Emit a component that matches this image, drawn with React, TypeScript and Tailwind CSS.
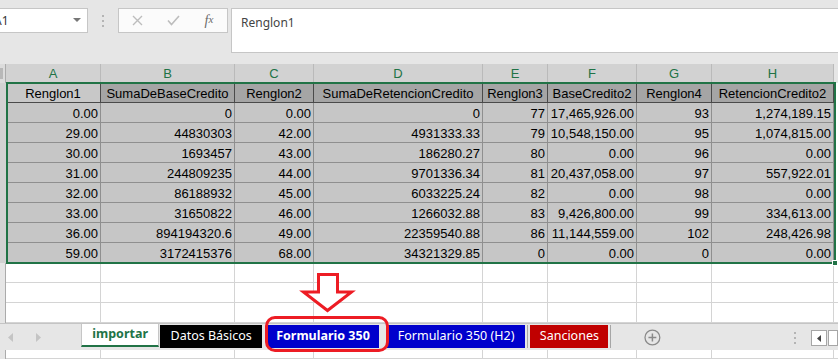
import React from 'react';

const COLS = [
  { key: 'A', w: 'w-[95px]' },
  { key: 'B', w: 'w-[134px]' },
  { key: 'C', w: 'w-[79px]' },
  { key: 'D', w: 'w-[169px]' },
  { key: 'E', w: 'w-[65px]' },
  { key: 'F', w: 'w-[89px]' },
  { key: 'G', w: 'w-[75px]' },
  { key: 'H', w: 'w-[122px]' },
];

const HEADERS = ['Renglon1', 'SumaDeBaseCredito', 'Renglon2', 'SumaDeRetencionCredito', 'Renglon3', 'BaseCredito2', 'Renglon4', 'RetencionCredito2'];

const ROWS = [
  ['0.00', '0', '0.00', '0', '77', '17,465,926.00', '93', '1,274,189.15'],
  ['29.00', '44830303', '42.00', '4931333.33', '79', '10,548,150.00', '95', '1,074,815.00'],
  ['30.00', '1693457', '43.00', '186280.27', '80', '0.00', '96', '0.00'],
  ['31.00', '244809235', '44.00', '9701336.34', '81', '20,437,058.00', '97', '557,922.01'],
  ['32.00', '86188932', '45.00', '6033225.24', '82', '0.00', '98', '0.00'],
  ['33.00', '31650822', '46.00', '1266032.88', '83', '9,426,800.00', '99', '334,613.00'],
  ['36.00', '894194320.6', '49.00', '22359540.88', '86', '11,144,559.00', '102', '248,426.98'],
  ['59.00', '3172415376', '68.00', '34321329.85', '0', '0.00', '0', '0.00'],
];

const EmptyRow = ({ h = 'h-[20px]' }: { h?: string }) => (
  <div className={`flex ${h}`}>
    <div className="w-[6px] bg-[#e6e6e6] border-r border-[#ababab]" />
    {COLS.map(c => (
      <div key={c.key} className={`${c.w} bg-white border-r border-b border-[#d4d4d4]`} />
    ))}
    <div className="flex-1 bg-white border-b border-[#d4d4d4]" />
  </div>
);

const TabSep = () => <div className="w-[1px] h-[23px] mt-[1px] bg-[#a6a6a6]" />;

export default function App() {
  return (
    <div className="relative w-[838px] h-[359px] overflow-hidden bg-[#e6e6e6] font-['Liberation_Sans',sans-serif]">
      {/* formula bar */}
      <div className="h-[64px] flex items-start pt-[8px] font-['Noto_Sans',sans-serif]">
        <div className="w-[88px] h-[25px] bg-white border border-l-0 border-[#c6c6c6] flex items-center overflow-hidden">
          <span className="ml-[-6px] text-[12px] text-[#333]">A1</span>
          <svg className="ml-auto mr-[6px]" width="8" height="5" viewBox="0 0 8 5">
            <path d="M0 0 L8 0 L4 4 Z" fill="#777" />
          </svg>
        </div>
        <div className="ml-[14px] mt-[7px] flex flex-col gap-[3px]">
          <div className="w-[2px] h-[2px] bg-[#b4b4b4]" />
          <div className="w-[2px] h-[2px] bg-[#b4b4b4]" />
          <div className="w-[2px] h-[2px] bg-[#b4b4b4]" />
        </div>
        <div className="ml-[14px] w-[110px] h-[25px] bg-[#fbfbfb] border border-[#c6c6c6] flex items-center">
          <span className="w-[36px] flex justify-center">
            <svg width="11" height="11" viewBox="0 0 11 11">
              <path d="M1 1 L10 10 M10 1 L1 10" stroke="#bdbdbd" strokeWidth="1.4" />
            </svg>
          </span>
          <span className="w-[36px] flex justify-center">
            <svg width="13" height="11" viewBox="0 0 13 11">
              <path d="M1 5.5 L4.5 9.5 L12 1" stroke="#bdbdbd" strokeWidth="1.6" fill="none" />
            </svg>
          </span>
          <span className="w-[36px] flex justify-center font-['Liberation_Serif',serif] italic text-[14px] text-[#6b6b6b] leading-none">
            f<span className="text-[11px]">x</span>
          </span>
        </div>
        <div className="ml-[3px] flex-1 h-[45px] bg-white border border-r-0 border-[#c6c6c6] pl-[9px] pt-[5px] text-[12px] text-[#444]">
          Renglon1
        </div>
      </div>

      {/* column headers */}
      <div className="flex h-[19px]">
        <div className="w-[6px] bg-[#dcdcdc] border-r border-[#ababab] relative overflow-hidden">
          <div className="absolute left-0 top-[4px] w-[3px] h-[11px] bg-[#b8b8b8]" />
        </div>
        {COLS.map(c => (
          <div key={c.key} className={`${c.w} bg-[#d2d2d2] border-r border-[#bababa] flex items-center justify-center text-[13px] text-[#217346]`}>
            {c.key}
          </div>
        ))}
        <div className="flex-1 bg-[#e6e6e6]" />
      </div>

      {/* table */}
      <div className="flex h-[20px]">
        <div className="w-[6px] bg-[#d2d2d2]" />
        {COLS.map((c, i) => (
          <div
            key={c.key}
            className={`${c.w} ${i === 0 ? 'bg-[#c8c8c8]' : 'bg-[#a5a5a5]'} border-r border-b border-[#4a4a4a] flex items-center justify-center pt-[2px] text-[13px] text-black whitespace-nowrap overflow-hidden`}
          >
            {HEADERS[i]}
          </div>
        ))}
        <div className="flex-1 bg-white" />
      </div>
      {ROWS.map((r, ri) => (
        <div key={ri} className="flex h-[20px]">
          <div className="w-[6px] bg-[#d2d2d2]" />
          {COLS.map((c, i) => (
            <div
              key={c.key}
              className={`${c.w} bg-[#c6c6c6] border-r border-b border-[#8f8f8f] flex items-center justify-end pr-[2px] pt-[2px] text-[13px] text-black whitespace-nowrap`}
            >
              {r[i]}
            </div>
          ))}
          <div className="flex-1 bg-white" />
        </div>
      ))}
      <EmptyRow />
      <EmptyRow />
      <EmptyRow />

      {/* sheet tabs */}
      <div className="h-[27px] flex items-start border-t border-[#c4c4c4] bg-[#e6e6e6] font-['Noto_Sans',sans-serif] text-[12.5px]">
        <div className="w-[82px] h-[26px] flex items-center">
          <svg className="ml-[8px]" width="5" height="9" viewBox="0 0 5 9">
            <path d="M5 0 L0 4.5 L5 9 Z" fill="#c4c4c4" />
          </svg>
          <svg className="ml-[23px]" width="5" height="9" viewBox="0 0 5 9">
            <path d="M0 0 L5 4.5 L0 9 Z" fill="#c4c4c4" />
          </svg>
        </div>
        <div className="w-[79px] h-[23px] bg-white border-x border-[#c6c6c6] border-b-2 border-b-[#217346] flex items-center justify-center font-bold text-[#217346]">
          importar
        </div>
        <div className="ml-[1px] mt-[1px] w-[103px] h-[23px] bg-black text-white flex items-center justify-center">
          Datos Básicos
        </div>
        <div className="ml-[5px] mt-[1px] w-[113px] h-[23px] bg-[#0000cc] text-white font-bold flex items-center justify-center">
          Formulario 350
        </div>
        <div className="ml-[8px] mt-[1px] w-[140px] h-[23px] bg-[#0000cc] text-white flex items-center justify-center">
          Formulario 350 (H2)
        </div>
        <div className="ml-[2px]"><TabSep /></div>
        <div className="ml-[2px] mt-[1px] w-[79px] h-[23px] bg-[#c00000] text-white flex items-center justify-center">
          Sanciones
        </div>
        <div className="ml-[2px]"><TabSep /></div>
        <svg className="ml-[33px] mt-[5px]" width="17" height="17" viewBox="0 0 17 17">
          <circle cx="8.5" cy="8.5" r="7.5" fill="none" stroke="#8a8a8a" strokeWidth="1.3" />
          <path d="M8.5 4.5 V12.5 M4.5 8.5 H12.5" stroke="#8a8a8a" strokeWidth="1.5" />
        </svg>
        <div className="ml-[133px] mt-[8px] flex flex-col gap-[3px]">
          <div className="w-[2px] h-[2px] bg-[#b4b4b4]" />
          <div className="w-[2px] h-[2px] bg-[#b4b4b4]" />
          <div className="w-[2px] h-[2px] bg-[#b4b4b4]" />
        </div>
        <div className="ml-[15px] mt-[6px] w-[16px] h-[16px] bg-white border border-[#a6a6a6] flex items-center justify-center">
          <svg width="4" height="7" viewBox="0 0 4 7">
            <path d="M4 0 L0 3.5 L4 7 Z" fill="#444" />
          </svg>
        </div>
        <div className="ml-[1px] mt-[6px] w-[10px] h-[16px] bg-white border border-[#a6a6a6]" />
      </div>
      <EmptyRow h="h-[9px]" />

      {/* selection border */}
      <div className="absolute left-[6px] top-[82px] w-[830px] h-[182px] border-2 border-[#217346] pointer-events-none" />
      <div className="absolute left-[832px] top-[260px] w-[6px] h-[6px] bg-[#217346] border border-white" />

      {/* red marker around the tab */}
      <div className="absolute left-[265px] top-[316px] w-[124px] h-[36px] border-[3px] border-[#ed1c24] rounded-[10px] pointer-events-none" />
      <svg className="absolute left-[298px] top-[270px]" width="58" height="46" viewBox="0 0 58 46">
        <path d="M20.5 4.5 H39.5 V22 H53.5 L29.5 40.5 L5.5 22 H20.5 Z" fill="white" stroke="#ed1c24" strokeWidth="3" />
      </svg>
    </div>
  );
}
